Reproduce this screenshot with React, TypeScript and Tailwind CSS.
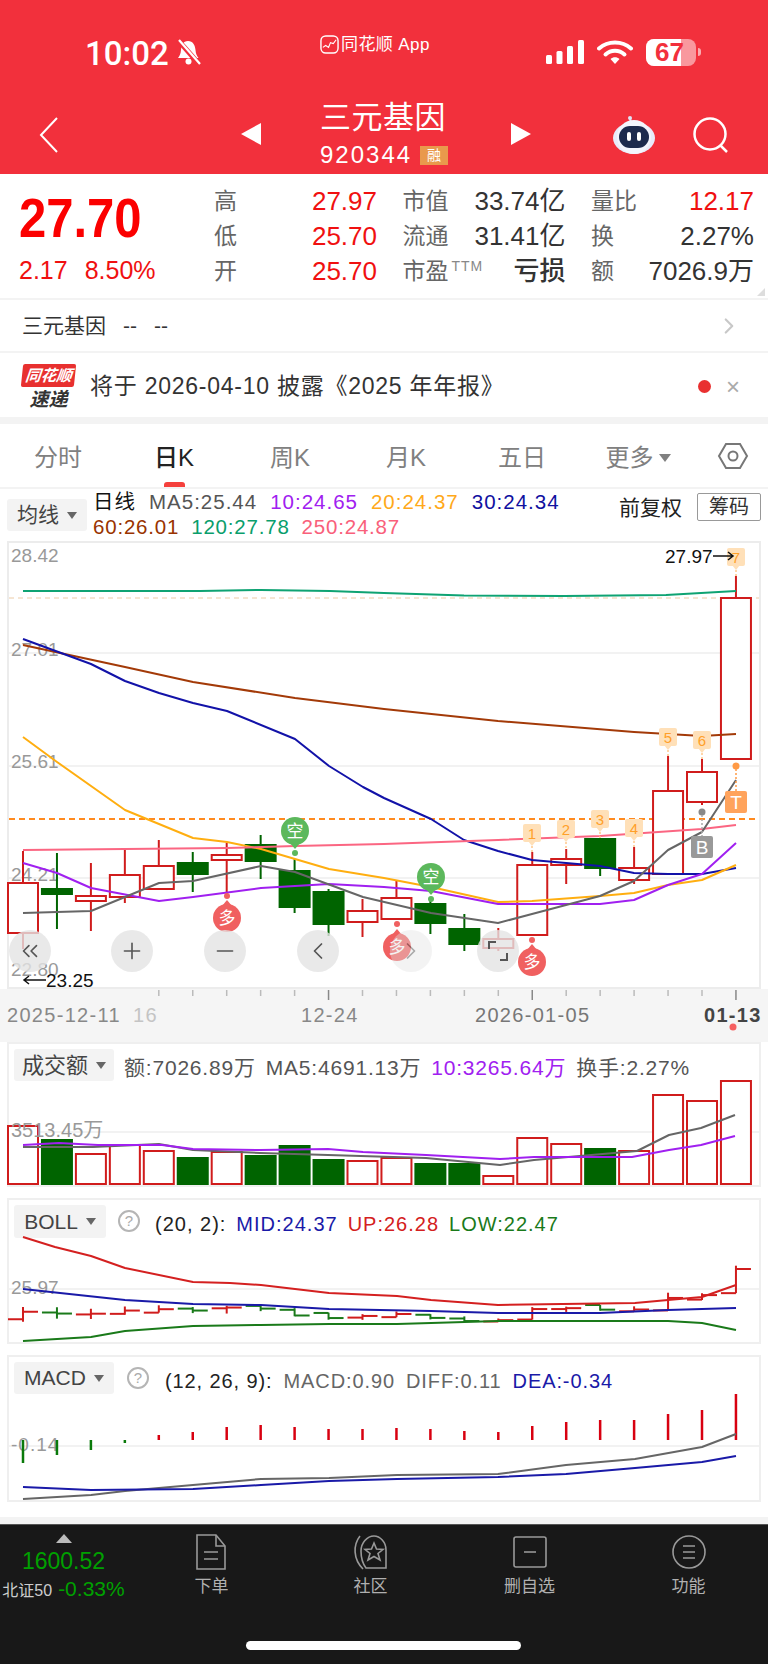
import { ChevronLeft, ChevronRight, ChevronsLeft, Minus, Plus } from "lucide-react";
import type { ReactNode } from "react";

const RED = "#d01c1c";
const GREEN = "#006400";
const cx = (i: number) => 23 + 33.95 * i;

type Pt = [number, number];
const pts = (a: Pt[]) => a.map((p) => p.join(",")).join(" ");

// [open-ish top, bottom, wick top, wick bottom, up?]
const candles: [number, number, number, number, boolean][] = [
  [884, 934, 852, 950, true],
  [889, 896, 854, 930, false],
  [897, 902, 864, 932, true],
  [876, 898, 849, 904, true],
  [867, 890, 841, 890, true],
  [863, 876, 853, 893, false],
  [856, 861, 844, 896, true],
  [845, 863, 836, 880, false],
  [871, 909, 860, 914, false],
  [892, 926, 890, 937, false],
  [912, 923, 900, 938, true],
  [899, 920, 882, 920, true],
  [904, 925, 900, 935, false],
  [929, 946, 915, 952, false],
  [940, 949, 929, 952, true],
  [866, 936, 853, 936, true],
  [860, 866, 850, 885, true],
  [839, 870, 839, 877, false],
  [869, 881, 848, 885, true],
  [792, 875, 757, 875, true],
  [773, 803, 760, 806, true],
  [599, 760, 577, 760, true],
];

const ma120: Pt[] = [[23, 592], [200, 592], [261, 591], [330, 592], [384, 594], [464, 596.5], [564, 597], [666, 596], [736, 592]];
const ma60: Pt[] = [[23, 646], [125, 668], [193, 683], [295, 699], [384, 710], [498, 722], [634, 733], [702, 737], [736, 735]];
const ma30: Pt[] = [[23, 640], [91, 665], [125, 682], [159, 694], [193, 704], [227, 712], [295, 740], [329, 767], [363, 788], [384, 799], [431, 820], [464, 841], [498, 852], [532, 861], [600, 867], [634, 874], [668, 875], [702, 875], [736, 869]];
const ma20: Pt[] = [[23, 738], [57, 763], [125, 811], [193, 839], [227, 843], [261, 850], [329, 870], [384, 879], [431, 888], [498, 903], [532, 902], [600, 897], [634, 894], [668, 886], [702, 881], [736, 866]];
const ma250: Pt[] = [[23, 851], [227, 849], [295, 847], [384, 845], [498, 841], [600, 837], [702, 830], [736, 826]];
const ma10: Pt[] = [[23, 864], [57, 874], [91, 889], [159, 902], [193, 898], [261, 889], [329, 885], [384, 888], [431, 892], [498, 905], [600, 905], [634, 901], [668, 886], [702, 875], [736, 844]];
const ma5: Pt[] = [[23, 914], [91, 912], [159, 884], [193, 882], [261, 867], [295, 873], [363, 898], [431, 914], [498, 924], [532, 915], [600, 897], [634, 882], [668, 851], [702, 833], [736, 781]];

const volTops = [1128, 1141, 1156, 1147, 1153, 1159, 1154, 1157, 1147, 1161, 1163, 1160, 1165, 1165, 1178, 1140, 1146, 1150, 1153, 1097, 1103, 1083];
const volGray: Pt[] = [[23, 1149], [93, 1149], [159, 1146], [193, 1152], [260, 1155], [328, 1157], [426, 1160], [500, 1167], [534, 1162], [637, 1153], [669, 1137], [701, 1130], [735, 1117]];
const volPurple: Pt[] = [[23, 1147], [59, 1145], [98, 1147], [162, 1147], [193, 1151], [260, 1152], [328, 1151], [363, 1154], [426, 1157], [500, 1161], [534, 1159], [632, 1159], [669, 1152], [701, 1147], [735, 1138]];

const bollUp: Pt[] = [[23, 1240], [55, 1250], [91, 1259], [125, 1271], [193, 1285], [230, 1286], [261, 1288], [329, 1296], [397, 1299], [431, 1303], [498, 1308], [635, 1306], [668, 1303], [702, 1300], [736, 1288]];
const bollMid: Pt[] = [[23, 1292], [125, 1303], [193, 1307], [261, 1308], [329, 1312], [431, 1314], [498, 1316], [600, 1316], [668, 1313], [736, 1311]];
const bollLow: Pt[] = [[23, 1344], [91, 1340], [125, 1334], [193, 1329], [261, 1328], [329, 1327], [397, 1327], [431, 1326], [498, 1324], [668, 1324], [702, 1326], [736, 1333]];

const macdTops = [1466, 1458, 1453, 1446, 1438, 1435, 1430, 1428, 1430, 1432, 1432, 1431, 1432, 1434, 1435, 1429, 1425, 1423, 1423, 1417, 1413, 1397];
const macdGray: Pt[] = [[23, 1502], [91, 1498], [125, 1494], [193, 1488], [261, 1482], [329, 1481], [397, 1478], [498, 1477], [566, 1468], [635, 1462], [702, 1450], [736, 1437]];
const macdBlue: Pt[] = [[23, 1490], [91, 1493], [193, 1492], [261, 1488], [329, 1484], [397, 1482], [498, 1480], [566, 1477], [635, 1471], [702, 1465], [736, 1459]];

function Line({ p, c, w = 2 }: { p: Pt[]; c: string; w?: number }) {
  return <polyline points={pts(p)} fill="none" stroke={c} strokeWidth={w} strokeLinejoin="round" />;
}

function Candle({ i }: { i: number }) {
  const [top, bottom, wt, wb, up] = candles[i];
  const x = cx(i);
  if (!up) {
    return (
      <g>
        <line x1={x} x2={x} y1={wt} y2={wb} stroke={GREEN} strokeWidth={2} />
        <rect x={x - 16} y={top} width={32} height={bottom - top} fill={GREEN} />
      </g>
    );
  }
  return (
    <g>
      <line x1={x} x2={x} y1={wt} y2={top} stroke={RED} strokeWidth={2} />
      <line x1={x} x2={x} y1={bottom} y2={wb} stroke={RED} strokeWidth={2} />
      <rect x={x - 15} y={top} width={30} height={bottom - top} fill="white" stroke={RED} strokeWidth={2} />
    </g>
  );
}

function Bubble({ x, y, dot, label, color }: { x: number; y: number; dot: number; label: string; color: string }) {
  const above = dot > y;
  return (
    <g>
      <circle cx={x} cy={dot} r={3} fill={color} />
      <polygon points={above ? `${x - 5},${y + 12} ${x + 5},${y + 12} ${x},${y + 18}` : `${x - 5},${y - 12} ${x + 5},${y - 12} ${x},${y - 18}`} fill={color} />
      <circle cx={x} cy={y} r={14} fill={color} />
      <text x={x} y={y + 6} textAnchor="middle" fontSize={17} fill="white">{label}</text>
    </g>
  );
}

function Tag({ x, y, label }: { x: number; y: number; label: string }) {
  return (
    <g>
      <line x1={x} x2={x} y1={y + 9} y2={y + 20} stroke="#ffc88a" strokeWidth={1.5} strokeDasharray="2 2" />
      <polygon points={`${x - 4},${y + 8} ${x + 4},${y + 8} ${x},${y + 13}`} fill="#ffe0b8" />
      <rect x={x - 9} y={y - 9} width={18} height={18} rx={2} fill="#ffe0b8" />
      <text x={x} y={y + 6} textAnchor="middle" fontSize={15} fill="#ffa02a">{label}</text>
    </g>
  );
}

function MainChart() {
  return (
    <svg viewBox="9 544 750 444" className="block h-[444px] w-[750px] overflow-visible">
      <g stroke="#eeeeee" strokeWidth={1.5}>
        <line x1={9} x2={759} y1={654} y2={654} />
        <line x1={9} x2={759} y1={767} y2={767} />
        <line x1={9} x2={759} y1={879} y2={879} />
      </g>
      <g fill="#999999" fontSize={19}>
        <text x={11} y={563}>28.42</text>
        <text x={11} y={657}>27.01</text>
        <text x={11} y={769}>25.61</text>
        <text x={11} y={882}>24.21</text>
        <text x={11} y={977}>22.80</text>
      </g>
      <line x1={9} x2={759} y1={599} y2={599} stroke="#eccba6" strokeWidth={1} strokeDasharray="5 4" />
      <line x1={9} x2={759} y1={820} y2={820} stroke="#ff8a1f" strokeWidth={2} strokeDasharray="6 4" />
      {candles.map((_, i) => (
        <Candle key={i} i={i} />
      ))}
      <Line p={ma120} c="#0fa373" />
      <Line p={ma60} c="#a33a08" />
      <Line p={ma30} c="#1212a8" />
      <Line p={ma20} c="#ffae10" />
      <Line p={ma250} c="#fb6682" />
      <Line p={ma10} c="#a020f0" />
      <Line p={ma5} c="#666666" />

      <Bubble x={295} y={832} dot={854} label="空" color="#5cb85c" />
      <Bubble x={431} y={878} dot={900} label="空" color="#5cb85c" />
      <Bubble x={227} y={919} dot={897} label="多" color="#f06060" />
      <Bubble x={397} y={948} dot={925} label="多" color="#f06060" />
      <Bubble x={532} y={963} dot={941} label="多" color="#f06060" />
      <Tag x={532} y={834} label="1" />
      <Tag x={566} y={830} label="2" />
      <Tag x={600} y={820} label="3" />
      <Tag x={634} y={829} label="4" />
      <Tag x={668} y={738} label="5" />
      <Tag x={702} y={741} label="6" />
      <Tag x={736} y={558} label="7" />

      <circle cx={736} cy={767} r={3.5} fill="#ff9a45" />
      <line x1={736} x2={736} y1={770} y2={792} stroke="#ff9a45" strokeDasharray="2 2" strokeWidth={1.5} />
      <rect x={725} y={792} width={22} height={22} rx={2} fill="#ffa35c" />
      <text x={736} y={810} textAnchor="middle" fontSize={19} fill="white">T</text>
      <circle cx={702} cy={813} r={3.5} fill="#888888" />
      <line x1={702} x2={702} y1={816} y2={837} stroke="#aaaaaa" strokeDasharray="2 2" strokeWidth={1.5} />
      <rect x={691} y={837} width={22} height={22} rx={2} fill="#999999" />
      <text x={702} y={855} textAnchor="middle" fontSize={19} fill="white">B</text>

      <text x={665} y={564} fontSize={19} fill="#111111">27.97</text>
      <path d="M713 557h20m-5-4l5 4-5 4" fill="none" stroke="#111111" strokeWidth={1.5} />
      <path d="M46 981H24m5-4l-5 4 5 4" fill="none" stroke="#111111" strokeWidth={1.5} />
      <text x={46} y={988} fontSize={19} fill="#111111">23.25</text>
    </svg>
  );
}

function DateAxis() {
  return (
    <svg viewBox="0 990 768 53" className="block h-[53px] w-[768px]">
      {candles.map((_, i) => {
        const big = i === 9 || i === 15 || i === 21;
        return i < 4 ? null : (
          <line key={i} x1={cx(i)} x2={cx(i)} y1={991} y2={big ? 1001 : 997} stroke={big ? "#888888" : "#bbbbbb"} strokeWidth={1.5} />
        );
      })}
      <g fontSize={20} letterSpacing={1.3}>
        <text x={7} y={1023} fill="#888888">2025-12-11</text>
        <text x={133} y={1023} fill="#c4c4c4">16</text>
        <text x={301} y={1023} fill="#888888">12-24</text>
        <text x={475} y={1023} fill="#777777">2026-01-05</text>
        <text x={704} y={1023} fill="#444444" fontWeight={700}>01-13</text>
      </g>
      <circle cx={733} cy={1028} r={3.5} fill="#f66060" />
    </svg>
  );
}

function VolChart() {
  return (
    <svg viewBox="9 1084 750 102" className="block h-[102px] w-[750px] overflow-visible">
      <line x1={9} x2={759} y1={1134} y2={1134} stroke="#eeeeee" strokeWidth={1.5} />
      {volTops.map((t, i) => {
        const up = candles[i][4];
        const x = cx(i);
        return up ? (
          <rect key={i} x={x - 15} y={t} width={30} height={1186 - t} fill="white" stroke={RED} strokeWidth={2} />
        ) : (
          <rect key={i} x={x - 16} y={t} width={32} height={1187 - t} fill={GREEN} />
        );
      })}
      <text x={11} y={1139} fontSize={20} fill="#999999">3513.45万</text>
      <Line p={volGray} c="#666666" />
      <Line p={volPurple} c="#a020f0" />
    </svg>
  );
}

const bollY = (y: number) => 1272 + (y - 599) * 0.15;

function BollChart() {
  return (
    <svg viewBox="9 1241 750 102" className="block h-[102px] w-[750px] overflow-visible">
      <line x1={9} x2={759} y1={1292} y2={1292} stroke="#eeeeee" strokeWidth={1.5} />
      <text x={11} y={1297} fontSize={19} fill="#999999">25.97</text>
      {candles.map(([top, bottom, wt, wb, up], i) => {
        const x = cx(i);
        const c = up ? RED : "#1a7a1a";
        const open = up ? bottom : top;
        const close = up ? top : bottom;
        return (
          <g key={i} stroke={c} strokeWidth={2}>
            <line x1={x} x2={x} y1={bollY(wt)} y2={bollY(wb)} />
            <line x1={x - 15} x2={x} y1={bollY(open)} y2={bollY(open)} />
            <line x1={x} x2={x + 15} y1={bollY(close)} y2={bollY(close)} />
          </g>
        );
      })}
      <Line p={bollUp} c="#d42020" />
      <Line p={bollMid} c="#1a1aa8" />
      <Line p={bollLow} c="#1a7a1a" />
    </svg>
  );
}

function MacdChart() {
  return (
    <svg viewBox="9 1398 750 103" className="block h-[103px] w-[750px] overflow-visible">
      <line x1={9} x2={759} y1={1449} y2={1449} stroke="#eeeeee" strokeWidth={1.5} />
      <text x={11} y={1454} fontSize={19} letterSpacing={1} fill="#999999">-0.14</text>
      {macdTops.map((t, i) => {
        const down = i < 4;
        return <line key={i} x1={cx(i)} x2={cx(i)} y1={1443} y2={t} stroke={down ? "#0a7a0a" : "#d80010"} strokeWidth={2.5} />;
      })}
      <Line p={macdGray} c="#666666" />
      <Line p={macdBlue} c="#1a1aa8" />
    </svg>
  );
}

function Select({ label, className }: { label: string; className: string }) {
  return (
    <div className={`flex items-center justify-center gap-2 rounded-[3px] bg-[#f3f3f3] text-[#444444] ${className}`}>
      <span>{label}</span>
      <span className="h-0 w-0 border-x-[5px] border-t-[7px] border-x-transparent border-t-[#666666]" />
    </div>
  );
}

function Help() {
  return (
    <span className="flex h-[22px] w-[22px] shrink-0 items-center justify-center rounded-full border-2 border-[#b5b5b5] text-[15px] tracking-normal text-[#aaaaaa]">?</span>
  );
}

function Panel({ header, children, className }: { header: ReactNode; children: ReactNode; className: string }) {
  return (
    <div className={`mx-[7px] w-[754px] border-2 border-[#efefef] bg-white ${className}`}>
      <div className="flex h-[38px] items-start pl-[5px] pt-[5px]">{header}</div>
      {children}
    </div>
  );
}

function Stat({ label, value, tone }: { label: ReactNode; value: string; tone: string }) {
  return (
    <div className="flex h-[35px] items-center justify-between">
      <span className="text-[23px] text-[#666666]">{label}</span>
      <span className={`text-[26px] ${tone}`}>{value}</span>
    </div>
  );
}

function StatusBar() {
  return (
    <div className="relative flex h-[88px] items-center pt-[16px] text-white">
      <div className="flex w-[320px] items-center pl-[85px]">
        <span className="mt-[3px] text-[33px] font-medium leading-none [font-family:Roboto,sans-serif]">10:02</span>
        <svg viewBox="0 0 25 26" className="ml-[7px] h-[26px] w-[25px]">
          <path d="M12 2c5 0 7 4 7.500 9 .3 4 1.500 6 3 8H2c1.500-2 2.700-4 3-8C5.500 6 7 2 12 2z" fill="white" />
          <circle cx="12.500" cy="22.500" r="3" fill="white" />
          <line x1="2" y1="1" x2="23" y2="25" stroke="#f2303c" strokeWidth="5" />
          <line x1="3" y1="1" x2="24" y2="25" stroke="white" strokeWidth="2.200" />
        </svg>
      </div>
      <div className="-mt-[15px] flex w-[226px] items-center gap-[2px]">
        <svg viewBox="0 0 20 20" className="h-[19px] w-[19px]">
          <rect x="1" y="1" width="18" height="18" rx="5" fill="#f2303c" stroke="white" strokeWidth="1.500" />
          <polyline points="3,13 6,11 9,13 11,8 14,9 17,5" fill="none" stroke="white" strokeWidth="1.200" />
        </svg>
        <span className="text-[17px] tracking-[0.4px]">同花顺 App</span>
      </div>
      <svg viewBox="0 0 38 24" className="h-[24px] w-[38px]">
        <rect x="0" y="15" width="6" height="9" rx="1.500" fill="white" />
        <rect x="10.500" y="11" width="6" height="13" rx="1.500" fill="white" />
        <rect x="21" y="6" width="6" height="18" rx="1.500" fill="white" />
        <rect x="32" y="0" width="6" height="24" rx="1.500" fill="white" />
      </svg>
      <svg viewBox="0 0 36 24" className="ml-[13px] h-[24px] w-[36px]">
        <path d="M2 8.500C11 .5 25 .5 34 8.500" fill="none" stroke="white" strokeWidth="4" strokeLinecap="round" />
        <path d="M8.500 14.500c5.500-5 13.500-5 19 0" fill="none" stroke="white" strokeWidth="4" strokeLinecap="round" />
        <path d="M13.500 19l4.500 5 4.500-5c-2.500-2.200-6.500-2.200-9 0z" fill="white" />
      </svg>
      <div className="relative ml-[13px] flex h-[27px] w-[50px] items-center overflow-hidden rounded-[8px] bg-white/50">
        <div className="h-full w-[35px] bg-white" />
        <span className="absolute left-[9px] text-[26px] font-bold leading-none text-[#f2303c]">67</span>
      </div>
      <div className="ml-[2px] h-[8px] w-[3px] rounded-r-full bg-white/60" />
    </div>
  );
}

function NavBar() {
  return (
    <div className="flex h-[86px] items-start text-white">
      <svg viewBox="0 0 20 36" className="ml-[39px] mt-[29px] h-[36px] w-[20px]">
        <polyline points="18,1 2,18 18,35" fill="none" stroke="white" strokeWidth="2" />
      </svg>
      <div className="ml-[182px] mt-[35px] h-0 w-0 border-y-[11px] border-r-[20px] border-y-transparent border-r-white" />
      <div className="ml-[59px] flex w-[191px] flex-col pt-[12px]">
        <span className="text-[31px] leading-[36px] tracking-[0.5px]">三元基因</span>
        <div className="mt-[5px] flex items-center">
          <span className="text-[24px] leading-[28px] tracking-[2px]">920344</span>
          <span className="ml-[8px] flex h-[19px] w-[28px] items-center justify-center bg-[#e9994c] text-[14px] text-white">融</span>
        </div>
      </div>
      <div className="mt-[35px] h-0 w-0 border-y-[11px] border-l-[20px] border-y-transparent border-l-white" />
      <svg viewBox="0 0 44 40" className="ml-[81px] mt-[27px] h-[40px] w-[44px]">
        <line x1="19" y1="9" x2="18" y2="3" stroke="#dfe3f5" strokeWidth="2" />
        <circle cx="18" cy="3" r="2" fill="#dfe3f5" />
        <ellipse cx="22" cy="23" rx="21" ry="16" fill="#e8ebfa" />
        <circle cx="22" cy="22" r="17" fill="#f4f5fd" />
        <rect x="7" y="11" width="30" height="22" rx="11" fill="#1d2a4d" />
        <rect x="15" y="17" width="4" height="9" rx="2" fill="white" />
        <rect x="25" y="17" width="4" height="9" rx="2" fill="white" />
      </svg>
      <svg viewBox="0 0 36 36" className="ml-[37px] mt-[29px] h-[36px] w-[36px]">
        <ellipse cx="17" cy="17" rx="15.500" ry="15.500" fill="none" stroke="white" strokeWidth="2.500" />
        <line x1="27" y1="28" x2="34" y2="35" stroke="white" strokeWidth="2.500" />
      </svg>
    </div>
  );
}

function Quote() {
  return (
    <div className="relative flex h-[124px] bg-white">
      <div className="w-[214px] pl-[19px] pt-[15px]">
        <div className="origin-top scale-y-[1.15] text-[49px] font-bold leading-[50px] text-[#fb0000]">27.70</div>
        <div className="mt-[17px] flex gap-[17px] text-[25px] leading-[28px] text-[#f01010]">
          <span>2.17</span>
          <span>8.50%</span>
        </div>
      </div>
      <div className="grid w-[540px] grid-cols-3 content-start gap-x-[25.500px] pt-[10px]">
        <Stat label="高" value="27.97" tone="text-[#f01010]" />
        <Stat label="市值" value="33.74亿" tone="text-[#333333]" />
        <Stat label="量比" value="12.17" tone="text-[#f01010]" />
        <Stat label="低" value="25.70" tone="text-[#f01010]" />
        <Stat label="流通" value="31.41亿" tone="text-[#333333]" />
        <Stat label="换" value="2.27%" tone="text-[#333333]" />
        <Stat label="开" value="25.70" tone="text-[#f01010]" />
        <Stat
          label={
            <span className="flex items-start">
              市盈<span className="mt-[2px] ml-[3px] text-[14px] tracking-[1px] text-[#888888]">TTM</span>
            </span>
          }
          value="亏损"
          tone="text-[#333333] font-medium"
        />
        <Stat label="额" value="7026.9万" tone="text-[#333333]" />
      </div>
      <div className="absolute bottom-[2px] right-[3px] h-0 w-0 border-b-[8px] border-l-[8px] border-b-[#dddddd] border-l-transparent" />
    </div>
  );
}

function IndexRow() {
  return (
    <div className="flex h-[55px] items-center border-y-2 border-[#f3f3f3] pl-[22px] pr-[26px] text-[21px] text-[#333333]">
      <span>三元基因</span>
      <span className="ml-[17px]">--</span>
      <span className="ml-[17px]">--</span>
      <ChevronRight size={26} strokeWidth={2} className="ml-auto text-[#c8c8c8]" />
    </div>
  );
}

function NewsRow() {
  return (
    <div className="flex h-[64px] items-center pl-[22px] pt-[3px]">
      <div className="flex w-[53px] flex-col items-center">
        <span className="flex h-[23px] w-[53px] -skew-x-6 items-center justify-center rounded-[2px] bg-[#e8302f] text-[15.500px] font-bold italic leading-none text-white">同花顺</span>
        <span className="mt-[3px] text-[19px] font-bold italic leading-[20px] text-[#333333]">速递</span>
      </div>
      <span className="ml-[15px] text-[23px] tracking-[0.75px] text-[#333333]">将于 2026-04-10 披露《2025 年年报》</span>
      <span className="ml-auto h-[13px] w-[13px] rounded-full bg-[#e93030]" />
      <span className="ml-[15px] mr-[28px] text-[24px] leading-none text-[#aaaaaa]">×</span>
    </div>
  );
}

function Tabs() {
  const tabs = ["分时", "日K", "周K", "月K", "五日"];
  return (
    <div className="grid h-[65px] grid-cols-[repeat(6,116px)_72px] items-center border-b-2 border-[#f3f3f3] text-[24px] text-[#808080]">
      {tabs.map((t) => (
        <div key={t} className="relative flex h-full items-center justify-center pt-[4px]">
          <span className={t === "日K" ? "font-medium text-[#222222]" : ""}>{t}</span>
          {t === "日K" && <span className="absolute bottom-0 h-[5px] w-[21px] rounded-t-[3px] bg-[#f5403c]" />}
        </div>
      ))}
      <div className="flex items-center justify-center gap-[5px] pt-[4px]">
        <span>更多</span>
        <span className="h-0 w-0 border-x-[6px] border-t-[8px] border-x-transparent border-t-[#808080]" />
      </div>
      <svg viewBox="0 0 32 28" className="ml-[21px] h-[28px] w-[32px]">
        <polygon points="9,2 23,2 30,14 23,26 9,26 2,14" fill="none" stroke="#777777" strokeWidth="2" />
        <circle cx="16" cy="14" r="4.500" fill="none" stroke="#777777" strokeWidth="2" />
      </svg>
    </div>
  );
}

function Legend() {
  return (
    <div className="flex h-[52px] pl-[7px]">
      <Select label="均线" className="mt-[10px] h-[32px] w-[80px] text-[21px]" />
      <div className="ml-[6px] w-[526px] text-[20.500px] leading-[25px] tracking-[0.8px]">
        <div className="flex gap-[13px] tracking-[1px]">
          <span className="text-[#111111]">日线</span>
          <span className="text-[#555555]">MA5:25.44</span>
          <span className="text-[#a020f0]">10:24.65</span>
          <span className="text-[#ffa91a]">20:24.37</span>
          <span className="text-[#1010a0]">30:24.34</span>
        </div>
        <div className="flex gap-[12px]">
          <span className="text-[#993300]">60:26.01</span>
          <span className="text-[#0a9e6c]">120:27.78</span>
          <span className="text-[#f9607a]">250:24.87</span>
        </div>
      </div>
      <span className="mt-[5px] text-[21px] leading-[28px] text-[#222222]">前复权</span>
      <span className="ml-[15px] mt-[4px] flex h-[28px] w-[64px] items-center justify-center rounded-[2px] border border-[#999999] text-[20px] text-[#333333]">筹码</span>
    </div>
  );
}

const chartButtons = [
  { pos: "left-0", icon: <ChevronsLeft size={26} strokeWidth={1.5} /> },
  { pos: "left-[102px]", icon: <Plus size={26} strokeWidth={1.5} /> },
  { pos: "left-[195px]", icon: <Minus size={26} strokeWidth={1.5} /> },
  { pos: "left-[288px]", icon: <ChevronLeft size={28} strokeWidth={1.5} /> },
  { pos: "left-[381px] opacity-50", icon: <ChevronRight size={28} strokeWidth={1.5} /> },
  {
    pos: "left-[468px]",
    icon: (
      <svg viewBox="0 0 24 24" className="h-[24px] w-[24px]">
        <polyline points="3,10 3,3 10,3" fill="none" stroke="#555555" strokeWidth="2" />
        <polyline points="14,21 21,21 21,14" fill="none" stroke="#555555" strokeWidth="2" />
      </svg>
    ),
  },
];

function FooterIcon({ children }: { children: ReactNode }) {
  return (
    <svg viewBox="0 0 36 36" className="h-[36px] w-[36px] fill-none stroke-[#999999] stroke-[1.6]">
      {children}
    </svg>
  );
}

function Footer() {
  const items = [
    {
      label: "下单",
      icon: (
        <FooterIcon>
          <path d="M3 1h19l9 11v23H3z" />
          <path d="M22 1v11h9M10 18h14M10 25h14" />
        </FooterIcon>
      ),
    },
    {
      label: "社区",
      icon: (
        <FooterIcon>
          <path d="M7 2c-7 9-7 23 3 33" />
          <path d="M13 34h20V16C33 8 27 2 21 2c-7 0-13 7-13 15 0 7 2 13 5 17z" />
          <polygon points="21,9 23.500,15 30,15.500 25,19.500 27,26 21,22.500 15,26 17,19.500 12,15.500 18.500,15" />
        </FooterIcon>
      ),
    },
    {
      label: "删自选",
      icon: (
        <FooterIcon>
          <rect x="2" y="3" width="32" height="30" rx="2" />
          <line x1="12" y1="18" x2="24" y2="18" />
        </FooterIcon>
      ),
    },
    {
      label: "功能",
      icon: (
        <FooterIcon>
          <circle cx="18" cy="18" r="16" />
          <path d="M12 12h12M12 18h12M12 24h12" />
        </FooterIcon>
      ),
    },
  ];
  return (
    <div className="flex h-[140px] flex-col border-t border-[#555555] bg-[#181818]">
      <div className="grid h-[116px] grid-cols-[132px_repeat(4,159px)]">
        <div className="flex flex-col items-center pr-[5px]">
          <span className="mt-[9px] h-0 w-0 border-x-[8px] border-b-[9px] border-x-transparent border-b-[#bbbbbb]" />
          <span className="mt-[3px] text-[23px] leading-[30px] text-[#00a000]">1600.52</span>
          <div className="-mt-[1px] flex items-baseline gap-[6px] whitespace-nowrap">
            <span className="text-[16px] text-[#cccccc]">北证50</span>
            <span className="text-[21px] leading-[28px] text-[#00a000]">-0.33%</span>
          </div>
        </div>
        {items.map((it) => (
          <div key={it.label} className="flex flex-col items-center pt-[9px]">
            {it.icon}
            <span className="mt-[5px] text-[17px] leading-[24px] text-[#b0b0b0]">{it.label}</span>
          </div>
        ))}
      </div>
      <div className="flex justify-center">
        <div className="ml-[-1px] h-[9px] w-[275px] rounded-full bg-white" />
      </div>
    </div>
  );
}

export default function App() {
  return (
    <div className="flex h-[1665px] w-[768px] flex-col overflow-hidden bg-white [font-family:'Liberation_Sans','Noto_Sans_CJK_SC',sans-serif]">
      <div className="h-[174px] bg-[#f2303c]">
        <StatusBar />
        <NavBar />
      </div>
      <Quote />
      <IndexRow />
      <NewsRow />
      <div className="h-[7px] bg-[#f3f3f3]" />
      <Tabs />
      <Legend />

      <div className="relative mx-[7px] h-[448px] w-[754px] border-2 border-[#ececec]">
        <MainChart />
        {chartButtons.map((b, i) => (
          <div key={i} className={`absolute top-[387px] flex h-[42px] w-[42px] items-center justify-center rounded-full bg-[#e4e4e4]/80 text-[#555555] ${b.pos}`}>
            {b.icon}
          </div>
        ))}
      </div>

      <div className="h-[53px] bg-[#f5f5f5]">
        <DateAxis />
      </div>

      <Panel
        className="h-[145px]"
        header={
          <>
            <Select label="成交额" className="h-[32px] w-[100px] text-[22px]" />
            <div className="ml-[10px] flex gap-[10px] whitespace-nowrap pt-[3px] text-[21px] tracking-[0.8px] text-[#555555]">
              <span>额:7026.89万</span>
              <span>MA5:4691.13万</span>
              <span className="text-[#a020f0]">10:3265.64万</span>
              <span>换手:2.27%</span>
            </div>
          </>
        }
      >
        <VolChart />
      </Panel>

      <Panel
        className="mt-[11px] h-[146px]"
        header={
          <>
            <Select label="BOLL" className="h-[33px] w-[92px] text-[21px]" />
            <span className="ml-[12px] mt-[5px]"><Help /></span>
            <div className="ml-[15px] flex gap-[10px] whitespace-nowrap pt-[4px] text-[20px] tracking-[1px]">
              <span className="text-[#222222]">(20, 2):</span>
              <span className="text-[#1a1aa8]">MID:24.37</span>
              <span className="text-[#d42020]">UP:26.28</span>
              <span className="text-[#1a7a1a]">LOW:22.47</span>
            </div>
          </>
        }
      >
        <BollChart />
      </Panel>

      <Panel
        className="mt-[11px] h-[147px]"
        header={
          <>
            <Select label="MACD" className="h-[32px] w-[100px] text-[21px]" />
            <span className="ml-[13px] mt-[5px]"><Help /></span>
            <div className="ml-[16px] flex gap-[11px] whitespace-nowrap pt-[4px] text-[20px] tracking-[0.9px]">
              <span className="text-[#222222]">(12, 26, 9):</span>
              <span className="text-[#666666]">MACD:0.90</span>
              <span className="text-[#666666]">DIFF:0.11</span>
              <span className="text-[#1a1aa8]">DEA:-0.34</span>
            </div>
          </>
        }
      >
        <MacdChart />
      </Panel>

      <div className="mt-[15px] h-[7px] bg-[#f3f3f3]" />
      <Footer />
    </div>
  );
}
